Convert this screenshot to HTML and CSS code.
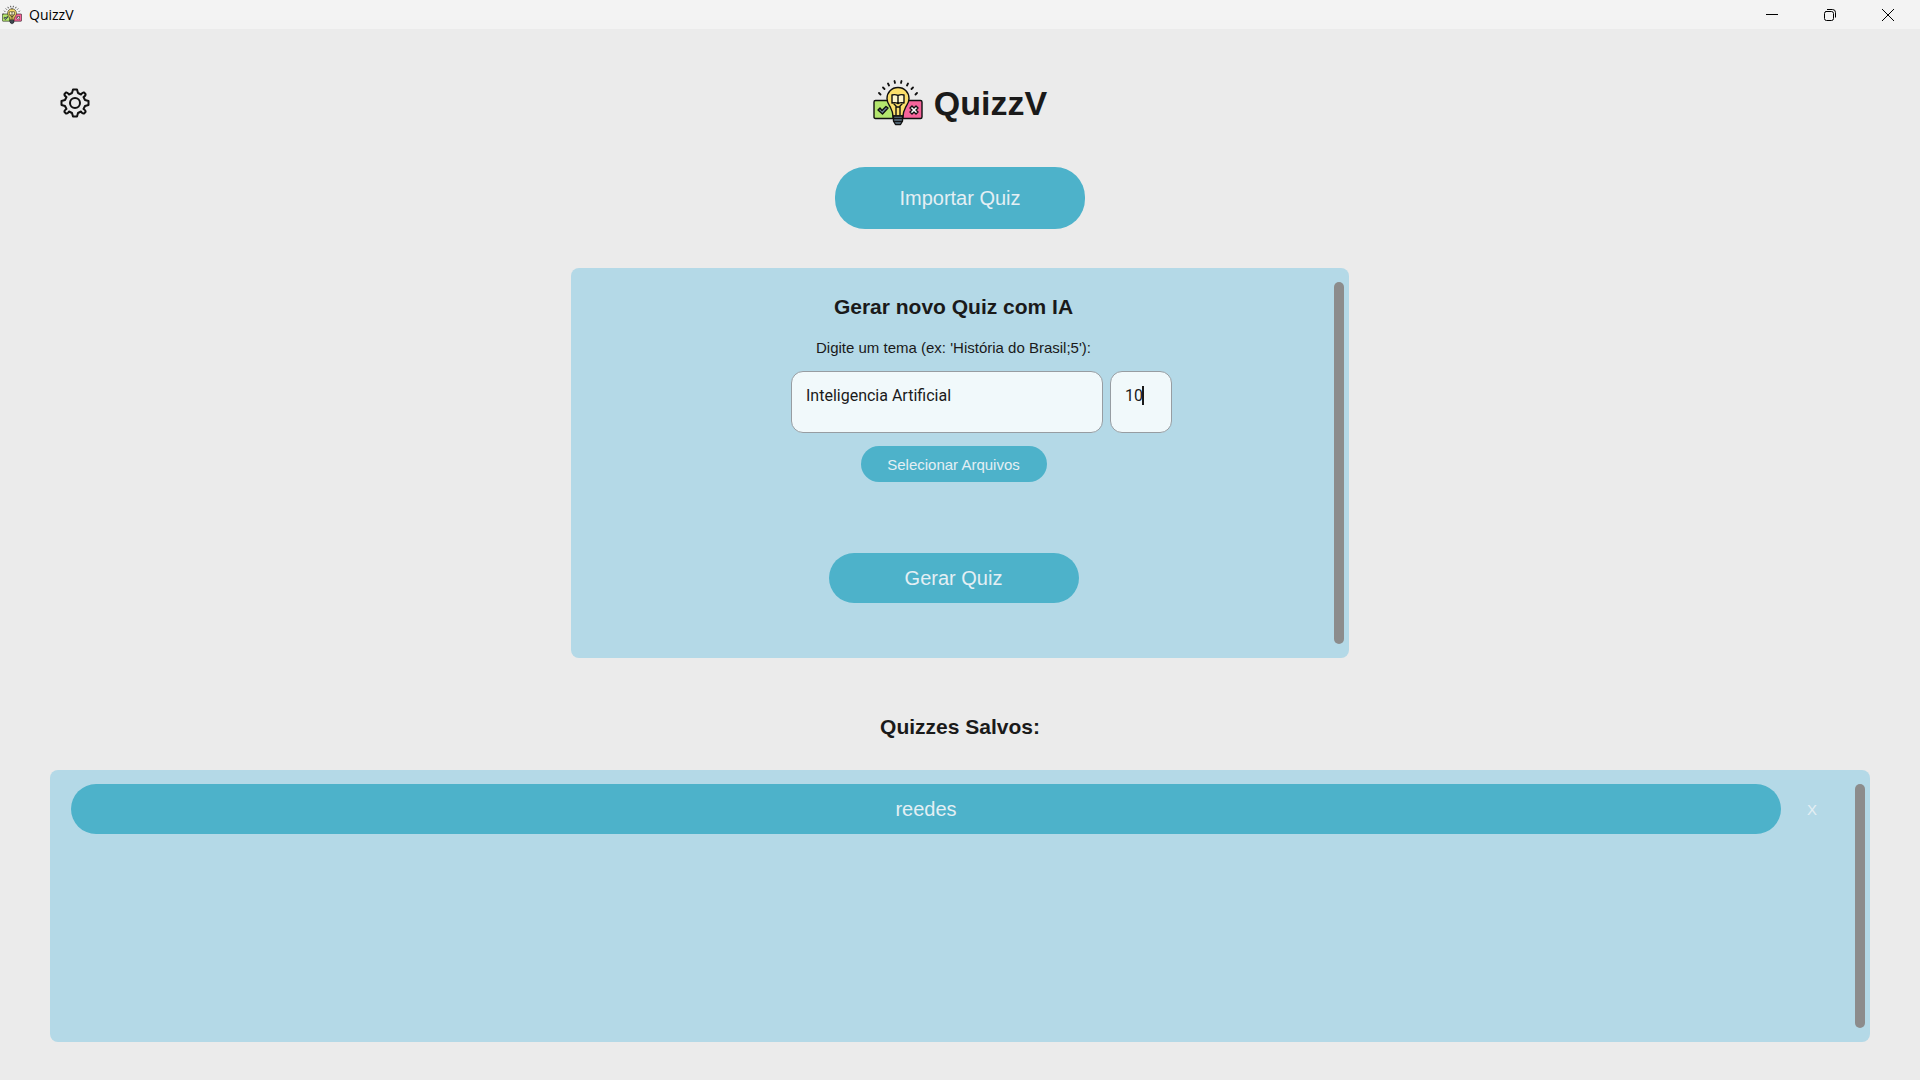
FILE: index.html
```
<!DOCTYPE html>
<html lang="pt-BR">
<head>
<meta charset="utf-8">
<meta name="viewport" content="width=device-width, initial-scale=1">
<title>QuizzV</title>
<link rel="stylesheet" href="styles.css">
</head>
<body>
<svg class="defs" aria-hidden="true">
  <symbol id="logo" viewBox="0 0 50 46">
    <g stroke="#111" stroke-width="1.4" stroke-linejoin="round" stroke-linecap="round">
      <path d="M2.500 20.500H20V38.500H2.500Q1 38.500 1 37V22Q1 20.500 2.500 20.500Z" fill="#b4e66e"/>
      <path d="M30 20.500H47.500Q49 20.500 49 22V37Q49 38.500 47.500 38.500H30Z" fill="#f7649b"/>
      <path d="M20 36V20.500H30V36Z" fill="#ececec" stroke="none"/>
      <path d="M25 7.500C18.500 7.500 14 12.200 14 18.500C14 23 16.200 25 17.500 27.500C19 30.500 20 33 20 36H30C30 33 31 30.500 32.500 27.500C33.800 25 36 23 36 18.500C36 12.200 31.500 7.500 25 7.500Z" fill="#fbdf6b"/>
      <path d="M23 35V26L21 24M27 35V26L29 24M23 27H27" fill="none"/>
      <path d="M19 15Q22 14 25 15.500Q28 14 31 15V23Q28 22 25 23.500Q22 22 19 23ZM25 15.500V23" fill="#fff6c8"/>
      <path d="M20.500 36H29.500V41L27.500 44.500H22.500L20.500 41Z" fill="#60798b"/>
      <path d="M20.500 38.500H29.500M21 41.500H29" fill="none"/>
      <path d="M5 30L7 28L9 30.500L13 26.500L15 28L9.500 34Z" fill="#71889d"/>
      <path d="M37 28L39 26L41 28L43 26L45 28L43 30L45 32L43 34L41 32L39 34L37 32L39 30Z" fill="#fff"/>
      <path d="M6 13L7.500 14.500M10 7.500L11.500 9M15 3.500L16 5.500M21.500 1L22 3M28.500 1L28 3M35 3.500L34 5.500M40 7.500L38.500 9M44 13L42.500 14.500" fill="none" stroke-width="1.800"/>
    </g>
  </symbol>
</svg>

<header class="titlebar">
  <svg class="titlebar-icon" aria-hidden="true"><use href="#logo"/></svg>
  <span class="titlebar-name">QuizzV</span>
  <button class="window-button" aria-label="Minimizar"><svg viewBox="0 0 12 12"><path d="M0 5.500H12"/></svg></button>
  <button class="window-button" aria-label="Restaurar"><svg viewBox="0 0 12 12"><path d="M3 .5H8.500Q11.500 .5 11.500 3.500V8.500M1.500 2.500H7.500Q9.500 2.500 9.500 4.500V9.500Q9.500 11.500 7.500 11.500H2.500Q.5 11.500 .5 9.500V4.500Q.5 2.500 2.500 2.500"/></svg></button>
  <button class="window-button" aria-label="Fechar"><svg viewBox="0 0 12 12"><path d="M0 0L12 12M12 0L0 12"/></svg></button>
</header>

<main class="page">
  <div class="brand-row">
    <button class="settings" aria-label="Configurações">
      <svg viewBox="0 0 30 30"><path d="M13 1.500H17L18 5L21 6.500Q22.500 4 24 4.500L25.500 6Q26 7.500 23.500 9L25 12L28.500 13V17L25 18L23.500 21Q26 22.500 25.500 24L24 25.500Q22.500 26 21 23.500L18 25L17 28.500H13L12 25L9 23.500Q7.500 26 6 25.500L4.500 24Q4 22.500 6.500 21L5 18L1.500 17V13L5 12L6.500 9Q4 7.500 4.500 6L6 4.500Q7.500 4 9 6.500L12 5Z"/><circle cx="15" cy="15" r="5"/></svg>
    </button>
    <div class="brand">
      <svg class="brand-logo" aria-hidden="true"><use href="#logo"/></svg>
      <h1>QuizzV</h1>
    </div>
  </div>

  <button class="pill import">Importar Quiz</button>

  <section class="panel generator">
    <form class="generator-form">
      <h2>Gerar novo Quiz com IA</h2>
      <label class="hint" for="topic">Digite um tema (ex: 'História do Brasil;5'):</label>
      <div class="fields">
        <input class="field" id="topic" type="text" value="Inteligencia Artificial">
        <div class="amount">
          <input class="field" type="text" value="10" aria-label="Número de perguntas">
          <span class="caret"></span>
        </div>
      </div>
      <button class="pill files" type="button">Selecionar Arquivos</button>
      <button class="pill generate" type="button">Gerar Quiz</button>
    </form>
    <div class="scrollbar"></div>
  </section>

  <h2 class="saved-title">Quizzes Salvos:</h2>

  <section class="panel saved">
    <div class="quiz-row">
      <button class="pill quiz">reedes</button>
      <button class="remove" aria-label="Excluir reedes">X</button>
    </div>
    <div class="scrollbar"></div>
  </section>
</main>
</body>
</html>
```
FILE: styles.css
```
* { box-sizing: border-box; }

body {
  margin: 0;
  min-height: 100vh;
  display: flex;
  flex-direction: column;
  background: #ebebeb;
  color: #1a1a1a;
  font-family: "Liberation Sans", Arial, sans-serif;
}

h1, h2 { margin: 0; }

button {
  border: 0;
  padding: 0;
  background: transparent;
  font-family: inherit;
}

.defs { position: absolute; width: 0; height: 0; }

.titlebar {
  display: flex;
  align-items: center;
  height: 29px;
  padding: 0 3px 0 2px;
  background: #f3f3f3;
}

.titlebar-icon { width: 20px; height: 20px; }

.titlebar-name {
  flex: 1;
  margin-left: 7px;
  color: #000;
  font: 14px/20px "Open Sans", sans-serif;
}

.window-button {
  display: grid;
  place-items: center;
  width: 58px;
  height: 28px;
}

.window-button svg {
  width: 12px;
  height: 12px;
  fill: none;
  stroke: #000;
  overflow: visible;
}

.page {
  flex: 1;
  display: flex;
  flex-direction: column;
  align-items: center;
  padding: 49px 50px 38px;
}

.brand-row {
  align-self: stretch;
  display: grid;
  grid-template-columns: 1fr auto 1fr;
  align-items: center;
  height: 50px;
  padding-left: 10px;
  padding-right: 10px;
}

.settings { width: 30px; height: 30px; }

.settings svg {
  display: block;
  fill: none;
  stroke: #111;
  stroke-width: 2;
  stroke-linejoin: round;
}

.brand { display: flex; align-items: center; gap: 11px; }
.brand-logo { width: 50px; height: 46px; }
.brand h1 { font-size: 34px; line-height: 40px; }

.pill {
  border-radius: 30px;
  background: #4db2ca;
  color: #e4eff4;
  font-size: 20px;
}

.import { width: 250px; height: 62px; margin-top: 39px; }

.panel {
  display: flex;
  padding: 14px 5px;
  border-radius: 8px;
  background: #b4d9e7;
}

.scrollbar { width: 10px; border-radius: 5px; background: #8c8c8c; }

.generator {
  width: 100%;
  max-width: 778px;
  min-height: 390px;
  margin-top: 39px;
}

.generator-form {
  flex: 1;
  display: flex;
  flex-direction: column;
  align-items: center;
  padding-top: 11px;
  padding-right: 3px;
}

h2 { font-size: 21px; line-height: 28px; }

.hint { margin-top: 17px; font-size: 15px; line-height: 20px; }

.fields {
  display: grid;
  grid-template-columns: 312px 62px;
  gap: 7px;
  margin-top: 13px;
  padding-left: 56px;
}

.field {
  width: 100%;
  height: 62px;
  padding: 0 14px 14px;
  border: 1px solid #979da2;
  border-radius: 12px;
  background: #f1f9fb;
  color: #1a1a1a;
  font: 16px Roboto, sans-serif;
  outline: 0;
}

.amount { position: relative; }

.caret {
  position: absolute;
  top: 15px;
  left: 32px;
  width: 2px;
  height: 19px;
  background: #1a1a1a;
}

.files { width: 186px; height: 36px; margin-top: 13px; font-size: 15px; }
.generate { width: 250px; height: 50px; margin-top: 71px; }

.saved-title { margin-top: 55px; }

.saved {
  flex: 1;
  align-self: stretch;
  align-items: stretch;
  margin-top: 29px;
}

.quiz-row {
  flex: 1;
  display: flex;
  align-items: flex-start;
  padding: 0 28px 0 16px;
}

.quiz { flex: 1; height: 50px; }

.remove {
  width: 30px;
  height: 50px;
  margin-left: 16px;
  color: #e4eff4;
  font-size: 15px;
}
```
